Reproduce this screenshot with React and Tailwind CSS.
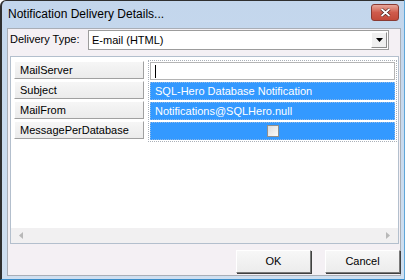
const ROWS = [
  { label: "MailServer", kind: "text" },
  { label: "Subject", kind: "value", value: "SQL-Hero Database Notification" },
  { label: "MailFrom", kind: "value", value: "Notifications@SQLHero.null" },
  { label: "MessagePerDatabase", kind: "check" },
];

function ValueCell({ row }) {
  if (row.kind === "text") {
    return (
      <div className="h-[18px] bg-white border border-[#b4b4b4] flex items-center pl-[4px]">
        <span className="w-px h-[13px] bg-black" />
      </div>
    );
  }
  if (row.kind === "check") {
    return (
      <div className="h-[18px] bg-[#3399ff] border border-dotted border-[#8fb8e6] flex items-center justify-center">
        <span className="w-[12px] h-[12px] border border-[#8e8f8f] bg-gradient-to-br from-[#dcdcdc] to-[#fbfbfb]" />
      </div>
    );
  }
  return (
    <div className="h-[18px] bg-[#3399ff] border border-dotted border-[#8fb8e6] flex items-center pl-[4px] text-white">
      {row.value}
    </div>
  );
}

export default function App() {
  return (
    <div className="w-[405px] h-[280px] bg-white text-[11px] text-black font-['Liberation_Sans',Arial,sans-serif]">
      <div className="w-[405px] h-[280px] flex flex-col bg-gradient-to-b from-[#c3d6ec] to-[#cfdff0] border-l-2 border-t border-[#2f2f2f] rounded-tl-[6px] border-r border-r-[#5fa6d8] border-b border-b-[#3a8cc8]">
        {/* Title bar */}
        <div className="h-[27px] flex items-center pl-[6px] pr-[5px]">
          <span className="text-[12px] -mt-[1px]">Notification Delivery Details...</span>
          <button className="ml-auto -mt-[5px] w-[28px] h-[17px] rounded-[3px] border border-[#8a3a32] bg-gradient-to-b from-[#e7a89c] via-[#cf5b4c] to-[#c24a3a] flex items-center justify-center">
            <svg width="11" height="9" viewBox="0 0 11 9">
              <path d="M1.5 1 L9.5 8 M9.5 1 L1.5 8" stroke="#3b1612" strokeWidth="3" />
              <path d="M1.5 1 L9.5 8 M9.5 1 L1.5 8" stroke="#fff" strokeWidth="1.8" />
            </svg>
          </button>
        </div>

        {/* Client area */}
        <div className="flex-1 ml-[5px] mr-[3px] mb-[3px] bg-[#f4f0f4] border border-[#a9aeb6] flex flex-col">
          {/* Delivery type */}
          <div className="flex items-center mt-[1px]">
            <span className="pl-[2px] w-[80px] -mt-[2px]">Delivery Type:</span>
            <div className="w-[301px] h-[20px] bg-white border border-[#9c9c9c] flex items-center pl-[3px]">
              <span>E-mail (HTML)</span>
              <div className="ml-auto mr-[1px] w-[16px] h-[16px] border border-t-white border-l-white border-r-[#8c8c8c] border-b-[#8c8c8c] bg-[#f0f0f0] flex items-center justify-center">
                <svg width="7" height="4" viewBox="0 0 7 4">
                  <path d="M0 0 H7 L3.5 4 Z" fill="#000" />
                </svg>
              </div>
            </div>
          </div>

          {/* Property grid panel */}
          <div className="mt-[6px] ml-[2px] w-[389px] h-[188px] border border-[#b3bfcd] bg-white flex flex-col">
            <div className="flex pl-[3px] pt-[4px]">
              <div className="w-[130px] flex flex-col gap-[2px]">
                {ROWS.map((row) => (
                  <div
                    key={row.label}
                    className="h-[18px] flex items-center pl-[5px] bg-gradient-to-b from-[#f6f6f6] to-[#ebebeb] border border-t-white border-l-white border-r-[#a0a0a0] border-b-[#a0a0a0]"
                  >
                    {row.label}
                  </div>
                ))}
              </div>
              <div className="ml-[4px] -mt-[1px] w-[249px] border border-dotted border-[#aab0b8] p-px flex flex-col gap-[2px]">
                {ROWS.map((row) => (
                  <ValueCell key={row.label} row={row} />
                ))}
              </div>
            </div>

            {/* Horizontal scrollbar */}
            <div className="mt-auto h-[15px] bg-[#f1f0f1] flex items-center justify-between px-[8px]">
              <svg width="4" height="7" viewBox="0 0 4 7">
                <path d="M4 0 V7 L0 3.5 Z" fill="#b8b8b8" />
              </svg>
              <svg width="4" height="7" viewBox="0 0 4 7">
                <path d="M0 0 V7 L4 3.5 Z" fill="#b8b8b8" />
              </svg>
            </div>
          </div>

          {/* Buttons */}
          <div className="flex justify-end gap-[14px] mt-[6px] pr-[0px]">
            <button className="w-[75px] h-[23px] bg-gradient-to-b from-[#f7f7f7] to-[#ececec] border border-t-white border-l-white border-r-[#7a7a7a] border-b-[#7a7a7a] shadow-[1px_1px_0_#404040]">
              OK
            </button>
            <button className="w-[75px] h-[23px] bg-gradient-to-b from-[#f7f7f7] to-[#ececec] border border-t-white border-l-white border-r-[#7a7a7a] border-b-[#7a7a7a] shadow-[1px_1px_0_#404040]">
              Cancel
            </button>
          </div>
        </div>
      </div>
    </div>
  );
}
